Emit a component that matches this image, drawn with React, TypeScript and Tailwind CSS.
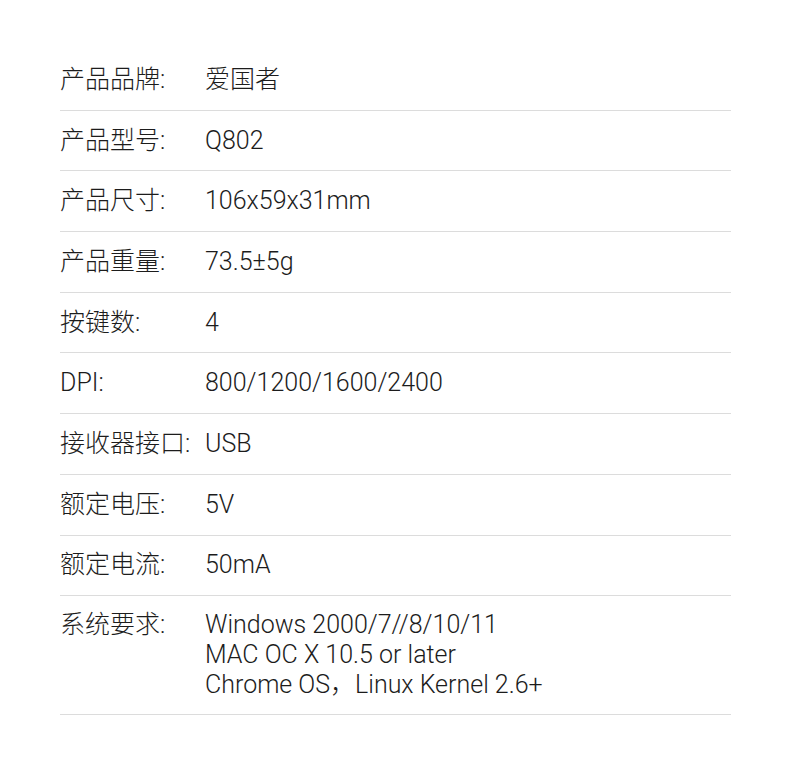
const specs: { label: string; value: string[] }[] = [
  { label: "产品品牌:", value: ["爱国者"] },
  { label: "产品型号:", value: ["Q802"] },
  { label: "产品尺寸:", value: ["106x59x31mm"] },
  { label: "产品重量:", value: ["73.5±5g"] },
  { label: "按键数:", value: ["4"] },
  { label: "DPI:", value: ["800/1200/1600/2400"] },
  { label: "接收器接口:", value: ["USB"] },
  { label: "额定电压:", value: ["5V"] },
  { label: "额定电流:", value: ["50mA"] },
  {
    label: "系统要求:",
    value: ["Windows 2000/7//8/10/11", "MAC OC X 10.5 or later", "Chrome OS，Linux Kernel 2.6+"],
  },
];

export default function App() {
  return (
    <div className="min-h-[760px] w-[790px] bg-white font-['Roboto','Noto_Sans_CJK_SC',sans-serif] font-light text-[#1c1c1c]">
      <div className="ml-[60px] w-[671px] pt-[50px]">
        {specs.map((row) => (
          <div
            key={row.label}
            className={`flex border-b border-[#dcdcdc] text-[25px] leading-[30px] ${
              row.value.length > 1 ? "pt-[13.5px] pb-[14.5px]" : "py-[14.85px]"
            }`}
          >
            <div className="w-[145px] shrink-0 whitespace-nowrap">{row.label}</div>
            <div>
              {row.value.map((line) => (
                <div key={line}>{line}</div>
              ))}
            </div>
          </div>
        ))}
      </div>
    </div>
  );
}
